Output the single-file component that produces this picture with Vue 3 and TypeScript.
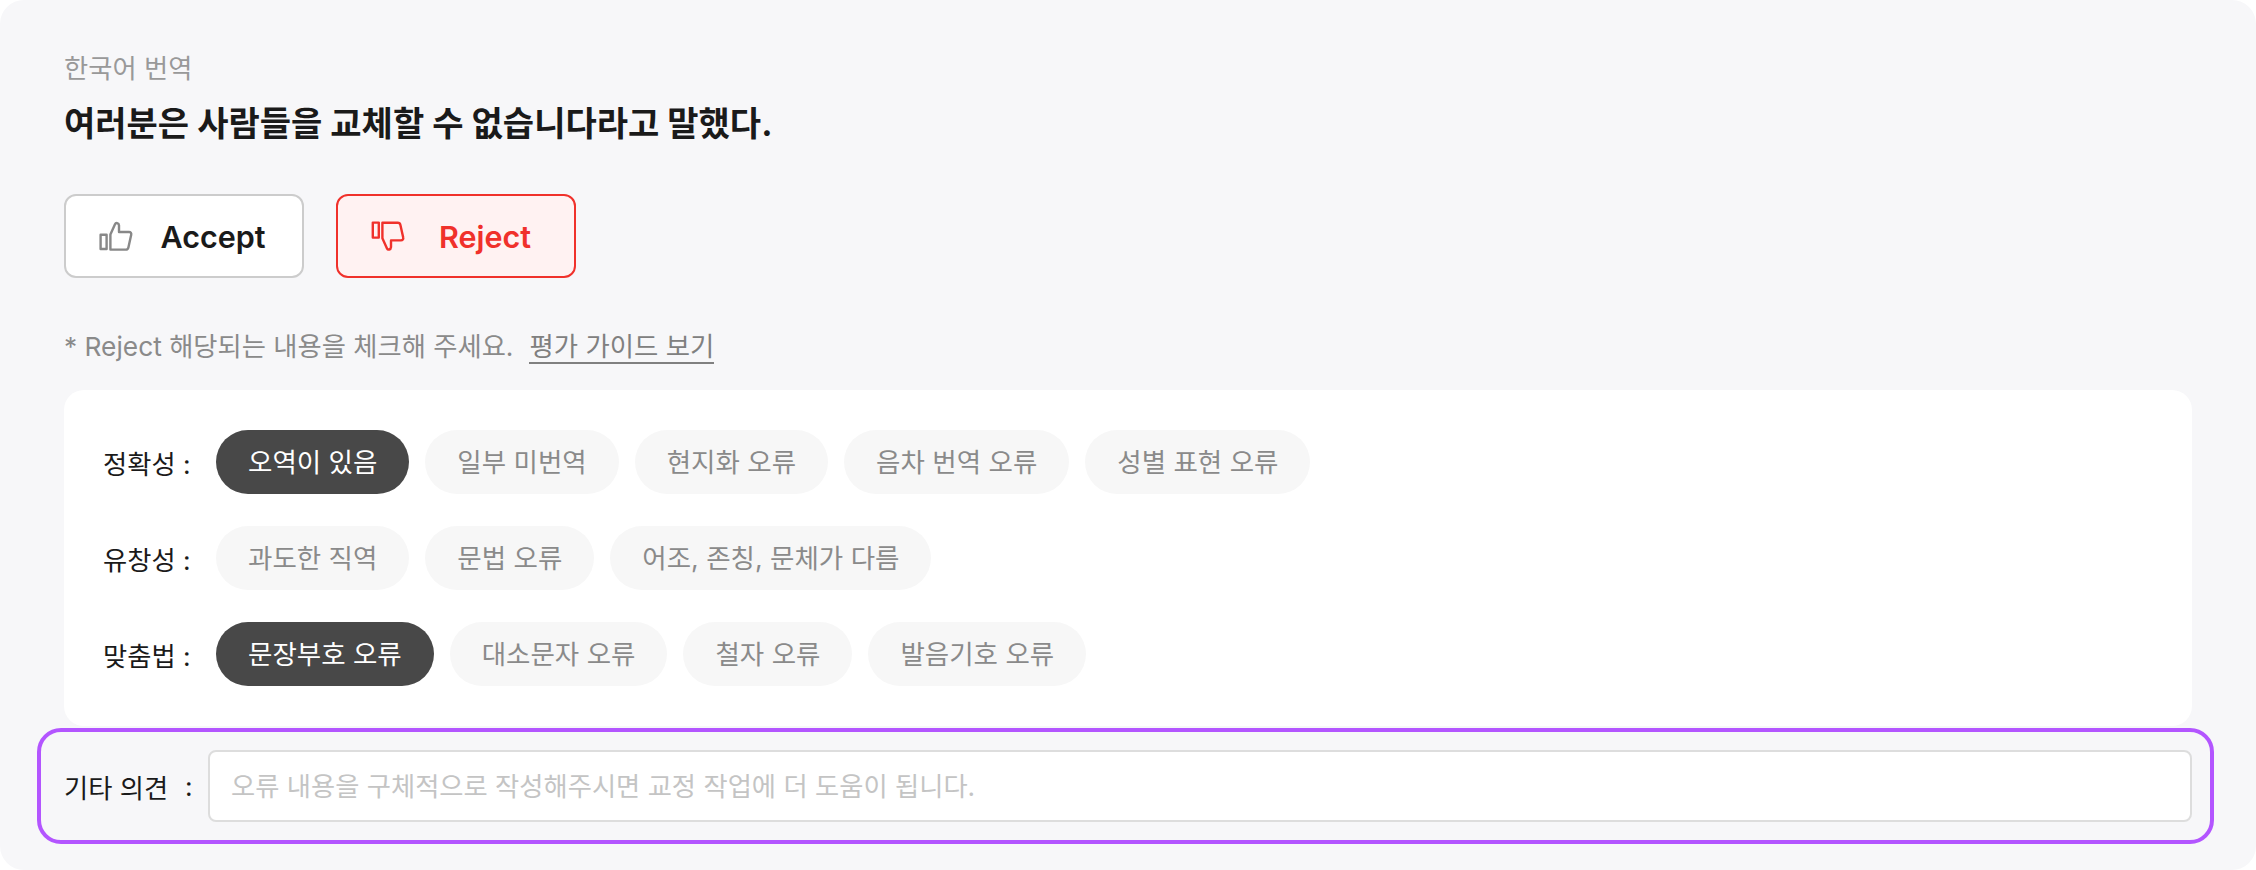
<script setup lang="ts">
interface Chip { label: string; active?: boolean }
interface Row { title: string; chips: Chip[] }
const rows: Row[] = [
  { title: '정확성 :', chips: [
    { label: '오역이 있음', active: true },
    { label: '일부 미번역' },
    { label: '현지화 오류' },
    { label: '음차 번역 오류' },
    { label: '성별 표현 오류' },
  ] },
  { title: '유창성 :', chips: [
    { label: '과도한 직역' },
    { label: '문법 오류' },
    { label: '어조, 존칭, 문체가 다름' },
  ] },
  { title: '맞춤법 :', chips: [
    { label: '문장부호 오류', active: true },
    { label: '대소문자 오류' },
    { label: '철자 오류' },
    { label: '발음기호 오류' },
  ] },
]
</script>

<template>
  <div class="panel">
    <div class="lang">한국어 번역</div>
    <div class="title">여러분은 사람들을 교체할 수 없습니다라고 말했다.</div>
    <div class="actions">
      <button class="btn accept" type="button">
        <svg class="ico" width="36" height="32" viewBox="0 0 36 32" fill="none" stroke="currentColor" stroke-width="2.4" stroke-linejoin="round">
          <rect x="2.6" y="14.8" width="6" height="14.2" />
          <path d="M12.4 29.6V14.5L17 4.2C17.8 2.4 20.8 2.6 21 5.4V12H31C32.6 12 33.6 13.2 33.2 14.8L30.4 27.4C30.1 28.8 29.2 29.6 27.8 29.6Z" />
        </svg>
        <span class="btn-text">Accept</span>
      </button>
      <button class="btn reject" type="button">
        <svg class="ico" width="36" height="32" viewBox="0 0 36 32" fill="none" stroke="currentColor" stroke-width="2.4" stroke-linejoin="round">
          <rect x="2.8" y="2.6" width="6" height="15" />
          <path d="M12.4 2.8V18.2L17 28.4C17.8 30.2 20.8 30 21 27.2V20.4H31C32.6 20.4 33.6 19.2 33.2 17.6L30.4 5C30.1 3.6 29.2 2.8 27.8 2.8Z" />
        </svg>
        <span class="btn-text">Reject</span>
      </button>
    </div>
    <div class="note">* Reject 해당되는 내용을 체크해 주세요.<a class="guide">평가 가이드 보기</a></div>
    <div class="card">
      <div v-for="row in rows" :key="row.title" class="row">
        <span class="row-title">{{ row.title }}</span>
        <span v-for="chip in row.chips" :key="chip.label" class="chip" :class="{ active: chip.active }">{{ chip.label }}</span>
      </div>
    </div>
    <div class="other">
      <span class="other-label">기타 의견</span>
      <span class="other-colon">:</span>
      <input class="other-input" type="text" placeholder="오류 내용을 구체적으로 작성해주시면 교정 작업에 더 도움이 됩니다." />
    </div>
  </div>
</template>

<style scoped>
.panel {
  box-sizing: border-box;
  width: 2256px;
  height: 870px;
  padding: 50px 64px 0;
  background: #f7f7f9;
  border-radius: 24px;
  font-family: Inter, "Noto Sans CJK KR", sans-serif;
  font-size: 26.3px;
}
.lang {
  line-height: 38px;
  color: #999999;
}
.title {
  margin-top: 13px;
  line-height: 46px;
  font-size: 34px;
  font-weight: 700;
  color: #1a1a1a;
}
.actions {
  display: flex;
  gap: 32px;
  margin-top: 47px;
}
.btn {
  box-sizing: border-box;
  display: flex;
  align-items: center;
  width: 240px;
  height: 84px;
  padding: 0 11px 0 32px;
  border: 2px solid #cccccc;
  border-radius: 12px;
  background: #ffffff;
  font: inherit;
  font-size: 30.5px;
  font-weight: 600;
  color: #888888;
}
.ico {
  flex: none;
}
.btn-text {
  flex: 1;
  text-align: center;
  color: #1a1a1a;
  padding-top: 1px;
  padding-left: 1px;
}
.reject {
  border-color: #f0312b;
  background: #fff2f2;
  color: #f0312b;
}
.reject .btn-text {
  color: #f0312b;
}
.note {
  margin-top: 50px;
  line-height: 36px;
  color: #8a8a8a;
}
.guide {
  margin-left: 16px;
  color: #808080;
  border-bottom: 2px solid #808080;
  font-size: 26.4px;
}
.card {
  margin-top: 25px;
  padding: 40px;
  display: flex;
  flex-direction: column;
  gap: 32px;
  background: #ffffff;
  border-radius: 20px;
}
.row {
  display: flex;
  align-items: center;
  gap: 16px;
}
.row-title {
  width: 96px;
  color: #1a1a1a;
  white-space: nowrap;
  margin-left: -1px;
  margin-right: 1px;
}
.chip {
  height: 64px;
  padding: 0 32px;
  border-radius: 32px;
  background: #f7f7f7;
  color: #8a8a8a;
  font-size: 26.5px;
  line-height: 64px;
  white-space: nowrap;
}
.chip.active {
  background: #484848;
  color: #ffffff;
}
.other {
  box-sizing: border-box;
  display: flex;
  align-items: center;
  height: 116px;
  margin: 2px -22px 0 -27px;
  padding: 0 18px 0 23px;
  border: 4px solid #b355ff;
  border-radius: 24px;
}
.other-label {
  width: 121px;
  color: #1a1a1a;
  white-space: nowrap;
}
.other-colon {
  width: 23px;
  color: #1a1a1a;
}
.other-input {
  box-sizing: border-box;
  flex: 1;
  height: 72px;
  padding: 0 21px;
  border: 2px solid #dddddd;
  border-radius: 8px;
  background: #ffffff;
  font: inherit;
  color: #1a1a1a;
  outline: none;
}
.other-input::placeholder {
  color: #c4c4c4;
  opacity: 1;
}
</style>

<style>
html, body {
  background: #ffffff;
}
</style>
